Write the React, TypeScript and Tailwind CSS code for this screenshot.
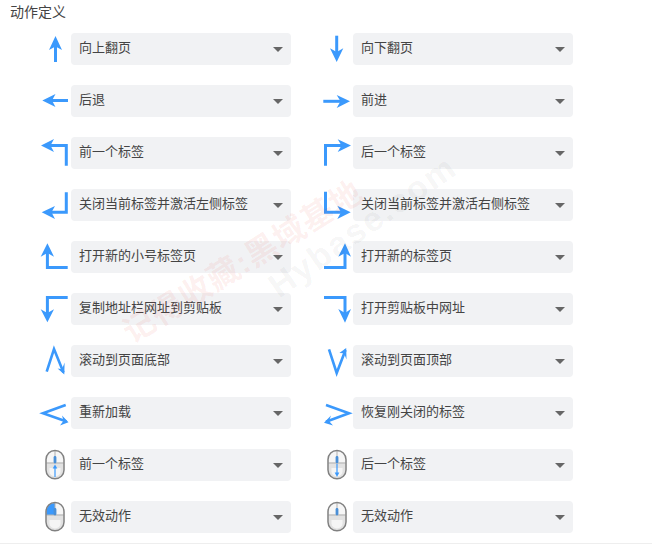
import type { ReactNode } from "react";

const BLUE = "#3b99fc";

type Pt = [number, number];

// swept arrow head: tip, the two outer corners and a notch on the shaft
function Head({ tip, a, b, notch }: { tip: Pt; a: Pt; b: Pt; notch: Pt }) {
  return <polygon points={[tip, a, notch, b].map((p) => p.join(",")).join(" ")} fill={BLUE} />;
}

function Line({ pts, w = 3 }: { pts: Pt[]; w?: number }) {
  return <polyline points={pts.map((p) => p.join(",")).join(" ")} fill="none" stroke={BLUE} strokeWidth={w} />;
}

function Svg({ children }: { children: ReactNode }) {
  return (
    <svg width="32" height="32" viewBox="0 0 32 32" className="shrink-0">
      {children}
    </svg>
  );
}

const icons: Record<string, ReactNode> = {
  up: (
    <>
      <Line pts={[[16.5, 29], [16.5, 10]]} />
      <Head tip={[16.5, 3]} a={[10, 17]} b={[23, 17]} notch={[16.5, 13.5]} />
    </>
  ),
  down: (
    <>
      <Line pts={[[15.7, 2.7], [15.7, 22]]} />
      <Head tip={[15.7, 29]} a={[9, 15.3]} b={[22.3, 15.3]} notch={[15.7, 19]} />
    </>
  ),
  back: (
    <>
      <Line pts={[[29, 15.5], [10, 15.5]]} />
      <Head tip={[3.3, 15.5]} a={[16.5, 9]} b={[16.5, 22]} notch={[13, 15.5]} />
    </>
  ),
  forward: (
    <>
      <Line pts={[[2.3, 16.3], [22, 16.3]]} />
      <Head tip={[29, 16.3]} a={[15.7, 10]} b={[15.7, 23]} notch={[19.5, 16.3]} />
    </>
  ),
  prevTab: (
    <>
      <Line pts={[[27.3, 28.7], [27.3, 8.6], [10, 8.6]]} />
      <Head tip={[2, 8.6]} a={[15, 2]} b={[15, 15]} notch={[11.5, 8.6]} />
    </>
  ),
  nextTab: (
    <>
      <Line pts={[[4.5, 28.7], [4.5, 8.6], [22, 8.6]]} />
      <Head tip={[30, 8.6]} a={[16.7, 2.3]} b={[16.7, 15]} notch={[20.5, 8.6]} />
    </>
  ),
  closeLeft: (
    <>
      <Line pts={[[27.3, 3.3], [27.3, 23.3], [10, 23.3]]} />
      <Head tip={[2.7, 23.3]} a={[16, 17]} b={[16, 30]} notch={[12.5, 23.3]} />
    </>
  ),
  closeRight: (
    <>
      <Line pts={[[4.5, 2.7], [4.5, 23.3], [22, 23.3]]} />
      <Head tip={[29.7, 23.3]} a={[16.3, 16.7]} b={[16.3, 30]} notch={[20, 23.3]} />
    </>
  ),
  newSmall: (
    <>
      <Line pts={[[8.4, 10], [8.4, 26.5], [28.7, 26.5]]} />
      <Head tip={[8.4, 2.3]} a={[1.7, 15.7]} b={[15, 15.7]} notch={[8.4, 12]} />
    </>
  ),
  newTab: (
    <>
      <Line pts={[[24, 10], [24, 26.5], [3, 26.5]]} />
      <Head tip={[24, 2.3]} a={[17.3, 15.7]} b={[30, 15.7]} notch={[24, 12]} />
    </>
  ),
  copyUrl: (
    <>
      <Line pts={[[28.7, 4.6], [8.4, 4.6], [8.4, 22]]} />
      <Head tip={[8.4, 29.3]} a={[1.7, 16.3]} b={[15, 16.3]} notch={[8.4, 20]} />
    </>
  ),
  openClip: (
    <>
      <Line pts={[[3, 4.6], [24, 4.6], [24, 22]]} />
      <Head tip={[24, 29.7]} a={[17.3, 16]} b={[30, 16]} notch={[24, 20]} />
    </>
  ),
  toBottom: (
    <>
      <Line pts={[[7.7, 26.7], [15, 4], [24.5, 27.5]]} w={2.6} />
      <Head tip={[25.3, 29.5]} a={[18.6, 23.5]} b={[25.6, 17.5]} notch={[23, 24.2]} />
    </>
  ),
  toTop: (
    <>
      <Line pts={[[8, 4.3], [15.7, 28], [24.5, 5]]} w={2.6} />
      <Head tip={[25.2, 3]} a={[18.4, 8]} b={[25.5, 14.5]} notch={[23, 8.2]} />
    </>
  ),
  reload: (
    <>
      <Line pts={[[26.7, 8], [4, 16.3], [27.5, 24.6]]} w={2.6} />
      <Head tip={[29.5, 25.3]} a={[23, 18.5]} b={[21, 28.5]} notch={[24.5, 23.7]} />
    </>
  ),
  reopen: (
    <>
      <Line pts={[[5, 8], [28, 16.3], [5, 24.8]]} w={2.6} />
      <Head tip={[3, 25.7]} a={[10, 18.6]} b={[12, 28.5]} notch={[8, 24]} />
    </>
  ),
};

const MOUSE_BODY = "M16 1.5C11 1.5 7.2 5 7 10.5V21c0 5 4 8.7 9 8.7s9-3.7 9-8.7V10.5C24.8 5 21 1.5 16 1.5z";

function Mouse({ variant }: { variant: "up" | "down" | "left" | "none" }) {
  return (
    <svg width="32" height="32" viewBox="0 0 32 32" className="shrink-0">
      <path d={MOUSE_BODY} fill="#f6f6f6" />
      <path d="M7.5 13.5h17V21c0 4.6-3.8 8.2-8.5 8.2S7.5 25.6 7.5 21z" fill="#e2e2e2" />
      <path d="M10.5 19h11v3.5a5.5 5 0 0 1-11 0z" fill="#f5f5f5" />
      {variant === "left" && <path d="M16 2v12H7.4v-3.5C7.6 5.4 11.2 2 16 2z" fill={BLUE} />}
      <path d="M7.5 14h17M16 2v12" stroke="#b0b0b0" strokeWidth="1" fill="none" />
      <path d={MOUSE_BODY} fill="none" stroke="#808080" strokeWidth="1.5" />
      <rect x="14.6" y="7" width="2.8" height="7.4" rx="1.4" fill="#4a8fd6" />
      {variant === "up" && (
        <>
          <path d="M16 28v-9" stroke={BLUE} strokeWidth="1.2" />
          <path d="M16 15.5l-2.3 4h4.6z" fill={BLUE} />
        </>
      )}
      {variant === "down" && (
        <>
          <path d="M16 15v9" stroke={BLUE} strokeWidth="1.2" />
          <path d="M16 28l-2.3-4.5h4.6z" fill={BLUE} />
        </>
      )}
    </svg>
  );
}

function Row({ icon, label }: { icon: ReactNode; label: string }) {
  return (
    <div className="flex items-center">
      {icon}
      <div className="flex h-8 w-[220px] items-center justify-between rounded bg-[#f1f2f4] pl-2 pr-2 text-[13px] text-[#444]">
        <span className="pb-[2px]">{label}</span>
        <span className="h-0 w-0 border-x-[5px] border-t-[5px] border-x-transparent border-t-[#666]" />
      </div>
    </div>
  );
}

const rows: { icon: ReactNode; label: string }[] = [
  { icon: <Svg>{icons.up}</Svg>, label: "向上翻页" },
  { icon: <Svg>{icons.down}</Svg>, label: "向下翻页" },
  { icon: <Svg>{icons.back}</Svg>, label: "后退" },
  { icon: <Svg>{icons.forward}</Svg>, label: "前进" },
  { icon: <Svg>{icons.prevTab}</Svg>, label: "前一个标签" },
  { icon: <Svg>{icons.nextTab}</Svg>, label: "后一个标签" },
  { icon: <Svg>{icons.closeLeft}</Svg>, label: "关闭当前标签并激活左侧标签" },
  { icon: <Svg>{icons.closeRight}</Svg>, label: "关闭当前标签并激活右侧标签" },
  { icon: <Svg>{icons.newSmall}</Svg>, label: "打开新的小号标签页" },
  { icon: <Svg>{icons.newTab}</Svg>, label: "打开新的标签页" },
  { icon: <Svg>{icons.copyUrl}</Svg>, label: "复制地址栏网址到剪贴板" },
  { icon: <Svg>{icons.openClip}</Svg>, label: "打开剪贴板中网址" },
  { icon: <Svg>{icons.toBottom}</Svg>, label: "滚动到页面底部" },
  { icon: <Svg>{icons.toTop}</Svg>, label: "滚动到页面顶部" },
  { icon: <Svg>{icons.reload}</Svg>, label: "重新加载" },
  { icon: <Svg>{icons.reopen}</Svg>, label: "恢复刚关闭的标签" },
  { icon: <Mouse variant="up" />, label: "前一个标签" },
  { icon: <Mouse variant="down" />, label: "后一个标签" },
  { icon: <Mouse variant="left" />, label: "无效动作" },
  { icon: <Mouse variant="none" />, label: "无效动作" },
];

export default function App() {
  return (
    <div className="relative h-[548px] w-[652px] overflow-hidden bg-white font-['Liberation_Sans','Noto_Sans_CJK_SC',sans-serif]">
      <h3 className="flex h-[33px] items-start pl-[10px] pt-[3px] text-[14px] font-normal leading-[18px] text-[#444]">动作定义</h3>
      <div className="grid grid-cols-[252px_252px] gap-x-[30px] gap-y-5 pl-[39px]">
        {rows.map((r, i) => (
          <Row key={i} icon={r.icon} label={r.label} />
        ))}
      </div>
      <div className="mt-[10px] h-px w-full bg-[#eeeeee]" />

      {/* watermark lying over the rows */}
      <div className="pointer-events-none absolute left-[126px] top-[319px] origin-left -rotate-[32deg] whitespace-nowrap text-[32px] font-bold leading-none tracking-[1px] text-[#e8281e]/[0.07]">
        记得收藏:黑域基地
      </div>
      <div className="pointer-events-none absolute left-[272px] top-[272px] origin-left -rotate-[35deg] whitespace-nowrap text-[34px] font-bold leading-none tracking-[2px] text-black/[0.05]">
        Hybase.com
      </div>
    </div>
  );
}
